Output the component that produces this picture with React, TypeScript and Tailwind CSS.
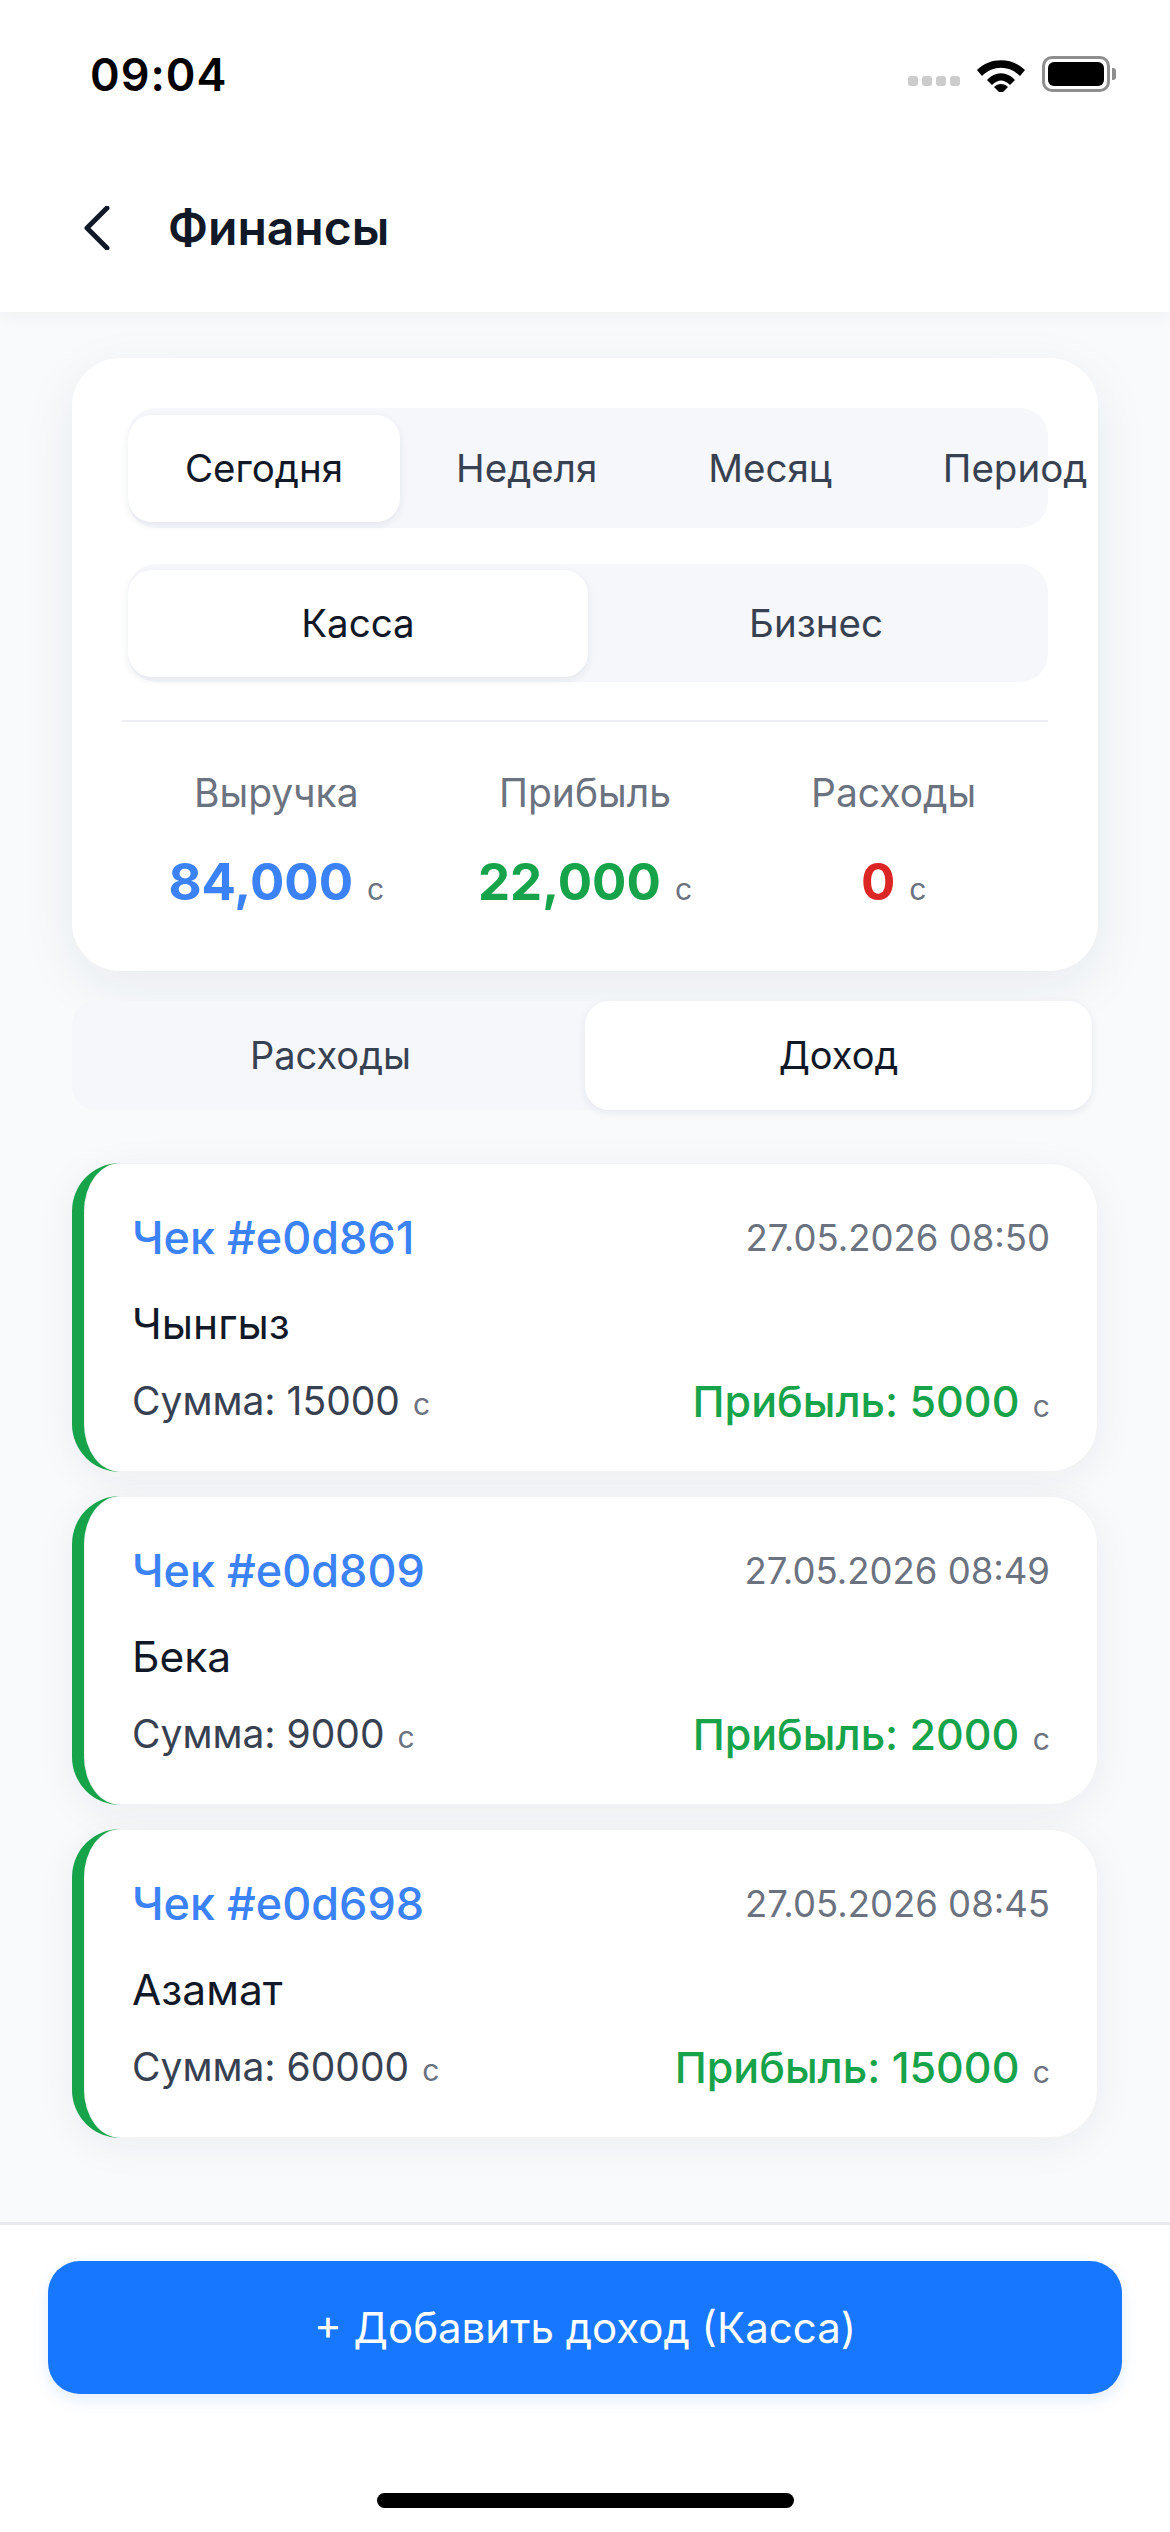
const receipts = [
  { id: "e0d861", date: "27.05.2026 08:50", name: "Чынгыз", sum: "15000", profit: "5000" },
  { id: "e0d809", date: "27.05.2026 08:49", name: "Бека", sum: "9000", profit: "2000" },
  { id: "e0d698", date: "27.05.2026 08:45", name: "Азамат", sum: "60000", profit: "15000" },
];

const stats = [
  { label: "Выручка", value: "84,000", color: "text-[#3b82f6]" },
  { label: "Прибыль", value: "22,000", color: "text-[#16a34a]" },
  { label: "Расходы", value: "0", color: "text-[#dc2626]" },
];

function StatusBar() {
  return (
    <div className="h-[150px] flex items-start justify-between pl-[90px] pr-[54px] pt-[48px]">
      <span className="text-[45px] leading-[54px] font-semibold text-black tracking-[1px]">09:04</span>
      <div className="flex items-center pt-[8px]">
        <div className="flex gap-[4px] mt-[14px] mr-[16px]">
          <div className="w-[10px] h-[10px] rounded-[3px] bg-[#cccccc]" />
          <div className="w-[10px] h-[10px] rounded-[3px] bg-[#cccccc]" />
          <div className="w-[10px] h-[10px] rounded-[3px] bg-[#cccccc]" />
          <div className="w-[10px] h-[10px] rounded-[3px] bg-[#cccccc]" />
        </div>
        <svg width="50" height="36" viewBox="0 0 50 36" className="mr-[16px]">
          <path d="M1 14 C14 1 36 1 49 14 L44 20 C33 9 17 9 6 20 Z" fill="#000" />
          <path d="M11 24 C19 15 31 15 39 24 L34 29 C28 23 22 23 16 29 Z" fill="#000" />
          <path d="M18 31 C22 27 28 27 32 31 L25 38 Z" fill="#000" />
        </svg>
        <div className="w-[68px] h-[36px] rounded-[10px] border-[3px] border-[#8e8e8e] p-[3px]">
          <div className="w-full h-full rounded-[6px] bg-black" />
        </div>
        <div className="w-[4px] h-[12px] rounded-r-[3px] bg-[#8e8e8e] ml-[2px]" />
      </div>
    </div>
  );
}

function Receipt({ id, date, name, sum, profit }: (typeof receipts)[number]) {
  return (
    <div className="h-[309px] rounded-[48px] border-l-[12px] border-[#16a34a] bg-white pl-[48px] pr-[48px] pt-[47px] shadow-[0_8px_40px_rgba(30,41,59,0.06),inset_0_0_0_1px_rgba(15,23,42,0.05)]">
      <div className="flex items-center justify-between h-[56px]">
        <span className="text-[45px] font-medium text-[#3b82f6]">Чек #{id}</span>
        <span className="text-[36.5px] text-[#6b7280]">{date}</span>
      </div>
      <div className="mt-[34px] h-[48px] flex items-center text-[42.5px] text-[#111827]">{name}</div>
      <div className="mt-[25px] flex items-center justify-between h-[56px]">
        <span className="text-[39px] text-[#374151]">
          Сумма: {sum} <span className="text-[30px] text-[#6b7280] ml-[2px]">с</span>
        </span>
        <span className="text-[43px] font-medium text-[#16a34a]">
          Прибыль: {profit} <span className="text-[30px] font-normal text-[#6b7280] ml-[2px]">с</span>
        </span>
      </div>
    </div>
  );
}

export default function App() {
  return (
    <div className="w-[1170px] h-[2532px] flex flex-col bg-[#f8fafc] font-['Inter',sans-serif] overflow-hidden">
      {/* Header */}
      <div className="h-[312px] bg-white shadow-[0_4px_16px_rgba(30,41,59,0.05)] relative">
        <StatusBar />
        <div className="flex items-center h-[156px] pl-[84px]">
          <svg width="26" height="44" viewBox="0 0 26 44" fill="none">
            <path d="M23 2 L3 22 L23 42" stroke="#111827" strokeWidth="5" strokeLinecap="round" strokeLinejoin="round" />
          </svg>
          <span className="ml-[58px] text-[48px] font-semibold text-[#111827]">Финансы</span>
        </div>
      </div>

      <div className="flex-1 px-[72px]">
        {/* Summary card */}
        <div className="mt-[46px] w-[1026px] h-[613px] rounded-[48px] bg-white pl-[56px] pr-[50px] pt-[50px] shadow-[0_16px_56px_rgba(30,41,59,0.07)]">
          <div className="h-[120px] rounded-[28px] bg-[#f5f7fb] flex items-center text-[38.5px] text-[#374151]">
            <div className="h-[107px] px-[57px] pt-[2px] rounded-[24px] bg-white text-[#111827] flex items-center shadow-[0_3px_8px_rgba(30,41,59,0.08)]">Сегодня</div>
            <div className="px-[56px] pt-[2px]">Неделя</div>
            <div className="px-[55px] pt-[2px]">Месяц</div>
            <div className="px-[56px] pt-[2px]">Период</div>
          </div>
          <div className="mt-[36px] h-[118px] rounded-[28px] bg-[#f5f7fb] grid grid-cols-2 items-center text-[38.5px] text-[#374151] text-center">
            <div className="h-[107px] pt-[2px] rounded-[24px] bg-white text-[#111827] flex items-center justify-center shadow-[0_3px_8px_rgba(30,41,59,0.08)]">Касса</div>
            <div className="pt-[2px] pr-[4px]">Бизнес</div>
          </div>
          <div className="mt-[38px] ml-[-6px] border-t-[2px] border-[#eceef2] grid grid-cols-3 pt-[46px] text-center">
            {stats.map((s) => (
              <div key={s.label}>
                <div className="text-[39px] leading-[50px] text-[#6b7280]">{s.label}</div>
                <div className="mt-[32px] leading-[64px]">
                  <span className={`text-[51px] font-bold ${s.color}`}>{s.value}</span>
                  <span className="text-[30px] text-[#6b7280] ml-[14px]">с</span>
                </div>
              </div>
            ))}
          </div>
        </div>

        {/* Expense / income switch */}
        <div className="mt-[30px] w-[1020px] h-[109px] rounded-[24px] bg-[#f5f7fb] grid grid-cols-[513px_1fr] items-center text-[38px] text-[#374151] text-center">
          <div className="pl-[4px]">Расходы</div>
          <div className="h-[109px] rounded-[24px] bg-white text-[#111827] flex items-center justify-center shadow-[0_3px_8px_rgba(30,41,59,0.08)]">Доход</div>
        </div>

        {/* Receipts */}
        <div className="mt-[53px] flex flex-col gap-[24px]">
          {receipts.map((r) => (
            <Receipt key={r.id} {...r} />
          ))}
        </div>
      </div>

      {/* Footer */}
      <div className="h-[310px] bg-white border-t-[3px] border-[#e7e9ee] px-[48px] pt-[36px] flex flex-col items-center">
        <div className="w-full h-[133px] rounded-[32px] bg-[#1877ff] flex items-center justify-center text-[42px] text-white shadow-[0_6px_16px_rgba(24,119,255,0.12)]">
          + Добавить доход (Касса)
        </div>
        <div className="mt-[99px] w-[417px] h-[15px] rounded-full bg-black" />
      </div>
    </div>
  );
}
